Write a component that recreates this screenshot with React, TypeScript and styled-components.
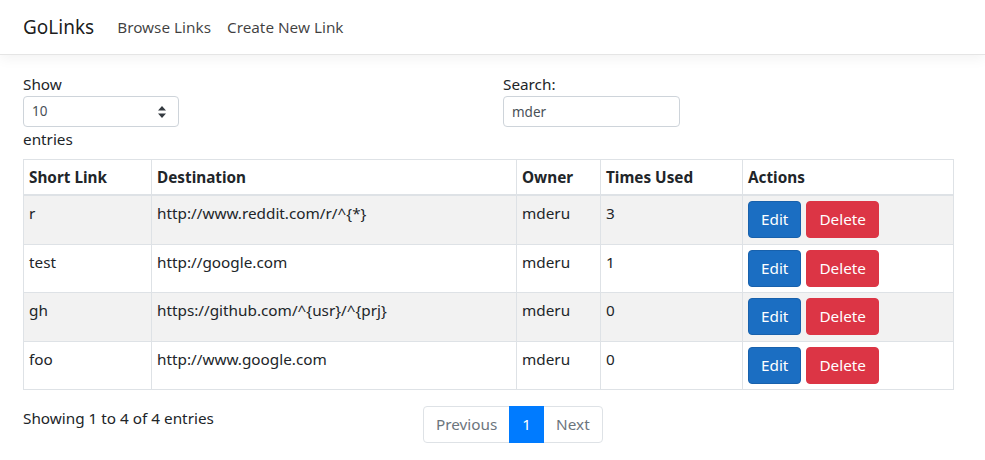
import React from 'react';
import styled, { createGlobalStyle } from 'styled-components';

const GlobalStyle = createGlobalStyle`
  * { box-sizing: border-box; }
  body {
    margin: 0;
    background: #fff;
    color: #212529;
    font-family: "Segoe UI", "Noto Sans", sans-serif;
    font-size: 15.3px;
    line-height: 24px;
  }
`;

const NavBar = styled.nav`
  display: flex;
  align-items: center;
  height: 55px;
  padding: 0 16px 0 23px;
  background: #fff;
  border-bottom: 1px solid #e5e5e5;
  box-shadow: 0 4px 12px rgba(0, 0, 0, 0.05);
`;

const Brand = styled.a`
  font-size: 19px;
  color: rgba(0, 0, 0, 0.9);
  margin-right: 15px;
  text-decoration: none;
`;

const NavLink = styled.a`
  padding: 8px;
  color: rgba(0, 0, 0, 0.75);
  text-decoration: none;
`;

const Main = styled.main`
  padding: 17px 32px 0 23px;
`;

const Controls = styled.div`
  display: grid;
  grid-template-columns: 1fr 1fr;
  column-gap: 30px;
`;

const Field = styled.label`
  display: block;
`;

const FieldText = styled.span`
  display: block;
`;

const SelectBox = styled.div`
  position: relative;
  width: 156px;
  height: 31px;
  border: 1px solid #ced4da;
  border-radius: 4px;
  padding: 0 8px;
  font-size: 13.5px;
  line-height: 29px;
  color: #495057;
`;

const Arrows = styled.svg`
  position: absolute;
  right: 12px;
  top: 9px;
`;

const SearchInput = styled.input`
  display: block;
  width: 177px;
  height: 31px;
  border: 1px solid #ced4da;
  border-radius: 4px;
  padding: 0 8px;
  font: inherit;
  font-size: 13.5px;
  color: #495057;
  outline: none;
`;

const Table = styled.table`
  width: 930px;
  margin: 8px 0 16px;
  border-collapse: collapse;
  table-layout: fixed;
`;

const Th = styled.th<{ $w: number }>`
  width: ${p => p.$w}px;
  text-align: left;
  font-weight: 700;
  padding: 5px;
  border: 1px solid #dee2e6;
  border-bottom: 2px solid #dee2e6;
`;

const Row = styled.tr<{ $striped: boolean }>`
  background: ${p => (p.$striped ? '#f2f2f2' : '#fff')};
`;

const Td = styled.td`
  padding: 5px 5px 5.5px;
  vertical-align: top;
  border: 1px solid #dee2e6;
`;

const Btn = styled.button<{ $variant: 'edit' | 'delete' }>`
  font: inherit;
  color: #fff;
  border: 1px solid ${p => (p.$variant === 'edit' ? '#1861ac' : '#dc3545')};
  background: ${p => (p.$variant === 'edit' ? '#1b6ec2' : '#dc3545')};
  border-radius: 4px;
  padding: 6px 12px;
  line-height: 23px;
  margin-right: 5px;
  vertical-align: top;
`;

const Footer = styled.div`
  display: grid;
  grid-template-columns: 370px 1fr;
  column-gap: 30px;
`;

const Pager = styled.ul`
  display: flex;
  margin: 0;
  padding: 0;
  list-style: none;
`;

const PageItem = styled.li<{ $active?: boolean }>`
  padding: 6px 12px;
  line-height: 23px;
  border: 1px solid ${p => (p.$active ? '#007bff' : '#dee2e6')};
  margin-left: -1px;
  background: ${p => (p.$active ? '#007bff' : '#fff')};
  color: ${p => (p.$active ? '#fff' : '#6c757d')};
  position: relative;
  z-index: ${p => (p.$active ? 1 : 0)};

  &:first-child {
    margin-left: 0;
    border-radius: 4px 0 0 4px;
  }
  &:last-child {
    border-radius: 0 4px 4px 0;
  }
`;

const links = [
  { short: 'r', dest: 'http://www.reddit.com/r/^{*}', owner: 'mderu', used: 3 },
  { short: 'test', dest: 'http://google.com', owner: 'mderu', used: 1 },
  { short: 'gh', dest: 'https://github.com/^{usr}/^{prj}', owner: 'mderu', used: 0 },
  { short: 'foo', dest: 'http://www.google.com', owner: 'mderu', used: 0 },
];

const App: React.FC = () => (
  <>
    <GlobalStyle />
    <NavBar>
      <Brand>GoLinks</Brand>
      <NavLink>Browse Links</NavLink>
      <NavLink>Create New Link</NavLink>
    </NavBar>
    <Main>
      <Controls>
        <Field>
          <FieldText>Show</FieldText>
          <SelectBox>
            10
            <Arrows width="8" height="12" viewBox="0 0 8 12">
              <path d="M4 0 L8 4.5 H0 Z M4 12 L8 7.5 H0 Z" fill="#343a40" />
            </Arrows>
          </SelectBox>
          <FieldText>entries</FieldText>
        </Field>
        <Field>
          <FieldText>Search:</FieldText>
          <SearchInput defaultValue="mder" />
        </Field>
      </Controls>
      <Table>
        <thead>
          <tr>
            <Th $w={128}>Short Link</Th>
            <Th $w={365}>Destination</Th>
            <Th $w={84}>Owner</Th>
            <Th $w={142}>Times Used</Th>
            <Th $w={211}>Actions</Th>
          </tr>
        </thead>
        <tbody>
          {links.map((l, i) => (
            <Row key={l.short} $striped={i % 2 === 0}>
              <Td>{l.short}</Td>
              <Td>{l.dest}</Td>
              <Td>{l.owner}</Td>
              <Td>{l.used}</Td>
              <Td>
                <Btn $variant="edit">Edit</Btn>
                <Btn $variant="delete">Delete</Btn>
              </Td>
            </Row>
          ))}
        </tbody>
      </Table>
      <Footer>
        <div>Showing 1 to 4 of 4 entries</div>
        <Pager>
          <PageItem>Previous</PageItem>
          <PageItem $active>1</PageItem>
          <PageItem>Next</PageItem>
        </Pager>
      </Footer>
    </Main>
  </>
);

export default App;
